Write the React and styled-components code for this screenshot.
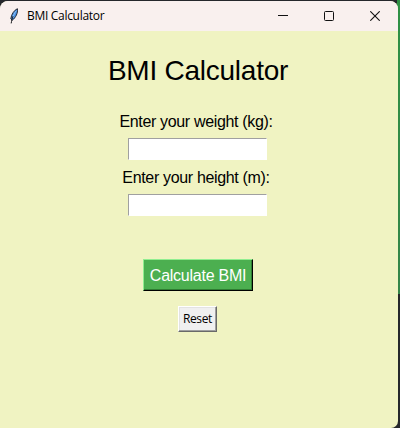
import React from "react";
import styled, { createGlobalStyle } from "styled-components";

const GlobalStyle = createGlobalStyle`
  * { box-sizing: border-box; }
  body { margin: 0; overflow: hidden; }
`;

const Desktop = styled.div`
  width: 400px;
  height: 428px;
  padding: 1px 2px 0 0;
  background:
    linear-gradient(#2f9144, #358549) right top / 3px 294px no-repeat,
    #25272b;
`;

const Window = styled.main`
  display: flex;
  flex-direction: column;
  height: 427px;
  border-radius: 8px 8px 7px 0;
  overflow: hidden;
  background: #f0f3c2;
`;

const TitleBar = styled.header`
  display: flex;
  align-items: center;
  flex: 0 0 30px;
  padding-left: 8px;
  background: #f9f0ee;
`;

const Feather = styled.svg`
  width: 12px;
  height: 16px;
  margin-right: 7px;
`;

const WindowTitle = styled.span`
  flex: 1;
  font: 12px/16px "Open Sans", sans-serif;
  letter-spacing: -0.3px;
  color: #000;
`;

const Controls = styled.div`
  display: flex;
`;

const Control = styled.button`
  display: flex;
  align-items: center;
  justify-content: center;
  width: 46px;
  height: 30px;
  padding: 0;
  border: 0;
  background: none;
  color: #111;
`;

const Form = styled.section`
  display: flex;
  flex-direction: column;
  align-items: center;
  padding-right: 2px;
  font-family: "Liberation Sans", Arial, sans-serif;
  color: #000;
`;

const Heading = styled.h1`
  margin: 23px 0 0;
  font-size: 28px;
  font-weight: 400;
  line-height: 34px;
  letter-spacing: -0.25px;
`;

const Fields = styled.div`
  margin-top: 24px;
  padding-right: 1px;
`;

const Field = styled.label`
  display: flex;
  flex-direction: column;
  align-items: center;
  height: 56px;
`;

const FieldLabel = styled.span`
  margin-right: 3px;
  font-size: 16px;
  line-height: 20px;
  letter-spacing: -0.34px;
  white-space: nowrap;
`;

const Entry = styled.input`
  width: 139px;
  height: 22px;
  margin-top: 6px;
  padding: 1px 2px;
  border: 1px solid;
  border-color: #a0a0a0 #fff #fff #a0a0a0;
  border-radius: 0;
  outline: 0;
  background: #fff;
`;

const Button = styled.button`
  border-radius: 0;
  white-space: nowrap;
`;

const CalculateButton = styled(Button)`
  width: 110px;
  height: 32px;
  margin-top: 35px;
  padding: 2px 0 0;
  border: 1px solid;
  border-color: #90ee90 #000 #000 #90ee90;
  box-shadow: inset -1px -1px #2f7d32;
  background: #4caf50;
  color: #fff;
  font: 16px/20px "Liberation Sans", Arial, sans-serif;
  letter-spacing: -0.25px;
`;

const ResetButton = styled(Button)`
  width: 39px;
  height: 26px;
  margin-top: 15px;
  margin-right: 1px;
  padding: 0;
  border: 1px solid;
  border-color: #fff #696969 #696969 #fff;
  box-shadow: inset -1px -1px #a0a0a0, inset 1px 1px #e3e3e3;
  background: #f0f0f0;
  color: #000;
  font: 12px/16px "Open Sans", sans-serif;
  letter-spacing: -0.35px;
`;

export default function App() {
  return (
    <>
      <GlobalStyle />
      <Desktop>
        <Window>
          <TitleBar>
            <Feather viewBox="0 0 12 16">
              <path d="M9.4.7C6.2 2.2 3.3 6.2 2.8 10.8L4.4 12.2C7.6 9.5 10.1 5.2 9.4.7Z" fill="#4b91e2" stroke="#17191d" strokeWidth=".9" />
              <path d="M8.2 2.8C6.4 5.5 5.2 8 4.6 10" fill="none" stroke="#8fc2f5" strokeWidth="1" />
              <path d="M5 8.2C4.1 10.5 3.6 12.5 3.2 15.4" fill="none" stroke="#17191d" strokeWidth="1" />
            </Feather>
            <WindowTitle>BMI Calculator</WindowTitle>
            <Controls>
              <Control aria-label="Minimize">
                <svg width="10" height="10"><path d="M0 4.5H10" stroke="currentColor" /></svg>
              </Control>
              <Control aria-label="Maximize">
                <svg width="10" height="10"><rect x=".5" y=".5" width="9" height="9" rx="1" fill="none" stroke="currentColor" /></svg>
              </Control>
              <Control aria-label="Close">
                <svg width="10" height="10"><path d="M.3.3 9.7 9.7M9.7.3.3 9.7" stroke="currentColor" strokeWidth="1.1" /></svg>
              </Control>
            </Controls>
          </TitleBar>
          <Form>
            <Heading>BMI Calculator</Heading>
            <Fields>
              <Field><FieldLabel>Enter your weight (kg):</FieldLabel><Entry /></Field>
              <Field><FieldLabel>Enter your height (m):</FieldLabel><Entry /></Field>
            </Fields>
            <CalculateButton>Calculate BMI</CalculateButton>
            <ResetButton>Reset</ResetButton>
          </Form>
        </Window>
      </Desktop>
    </>
  );
}
